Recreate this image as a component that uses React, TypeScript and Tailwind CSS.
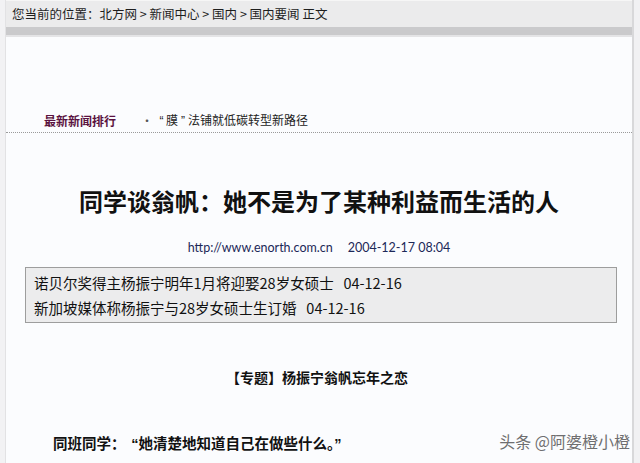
import React from "react";

export default function App() {
  const cjk = { fontFamily: '"Noto Sans CJK SC", "Liberation Sans", sans-serif' };
  const latin = { fontFamily: '"Liberation Sans", sans-serif' };
  return (
    <div
      className="relative w-[640px] h-[463px] overflow-hidden bg-[#f4f4f6] flex"
      style={cjk}
    >
      <div className="w-[6px] shrink-0 bg-[#f2f2f4] border-r border-[#e2e2e4]" />
      <div className="w-[626px] shrink-0 flex flex-col bg-[#fbfcfe]">
        <div className="h-[27px] bg-[#ebebec] border-t border-[#f6f6f6] flex items-center pl-[6px] text-[12.5px] text-[#1e1e1e] whitespace-pre">
          您当前的位置：北方网 &gt; 新闻中心 &gt; 国内 &gt; 国内要闻 正文
        </div>
        <div className="h-[8px] bg-[#cacacc]" />
        <div className="h-[2px] bg-[#e4e4e6]" />
        <div className="flex flex-col flex-1">
          <div className="mt-[72px] h-[24px] flex items-center pl-[38px] border-b border-dotted border-[#9a9a9a]">
            <span className="text-[12px] font-bold text-[#5a1240]">最新新闻排行</span>
            <span className="ml-[25px] text-[12px] text-[#555]">·</span>
            <span className="ml-[4px] text-[12px] text-[#222]">
              <span className="inline-block w-[9px] text-center" style={latin}>“</span>膜<span className="inline-block w-[10px] text-center" style={latin}>”</span>法铺就低碳转型新路径
            </span>
          </div>
          <div className="mt-[52px] text-center text-[24px] font-bold text-[#111] leading-[32px]">
            同学谈翁帆：她不是为了某种利益而生活的人
          </div>
          <div
            className="mt-[22px] flex justify-center gap-[15px] text-[12.5px] text-[#1c2858] leading-[18px]"
            style={{ fontFamily: 'Lato, "Liberation Sans", sans-serif' }}
          >
            <span>http://www.enorth.com.cn</span>
            <span>2004-12-17 08:04</span>
          </div>
          <div className="mt-[10px] ml-[19px] w-[592px] h-[56px] border border-[#9d9d9d] bg-[#ececed] flex flex-col justify-center gap-[5px] pl-[8px] text-[14.5px] text-[#111] leading-[20px]">
            <div>诺贝尔奖得主杨振宁明年1月将迎娶28岁女硕士&nbsp;&nbsp;&nbsp;04-12-16</div>
            <div>新加坡媒体称杨振宁与28岁女硕士生订婚&nbsp;&nbsp;&nbsp;04-12-16</div>
          </div>
          <div className="mt-[44px] text-center text-[14px] font-bold text-[#111] leading-[20px] pr-[4px]">
            【专题】杨振宁翁帆忘年之恋
          </div>
          <div className="mt-[46px] pl-[47px] text-[14.5px] font-bold text-[#111] leading-[20px]">
            同班同学：<span className="inline-block w-[13px] text-right" style={latin}>“</span>她清楚地知道自己在做些什么。<span style={latin}>”</span>
          </div>
        </div>
      </div>
      <div className="w-[2px] shrink-0 bg-[#d8d8da]" />
      <div className="flex-1 bg-[#f1f1f3]" />
      <div
        className="absolute right-[10px] top-[429px] text-[16px] text-[#6e6e70]"
        style={{ textShadow: "0 0 2px #fff, 0 0 1px #fff" }}
      >
        头条 @阿婆橙小橙
      </div>
    </div>
  );
}
